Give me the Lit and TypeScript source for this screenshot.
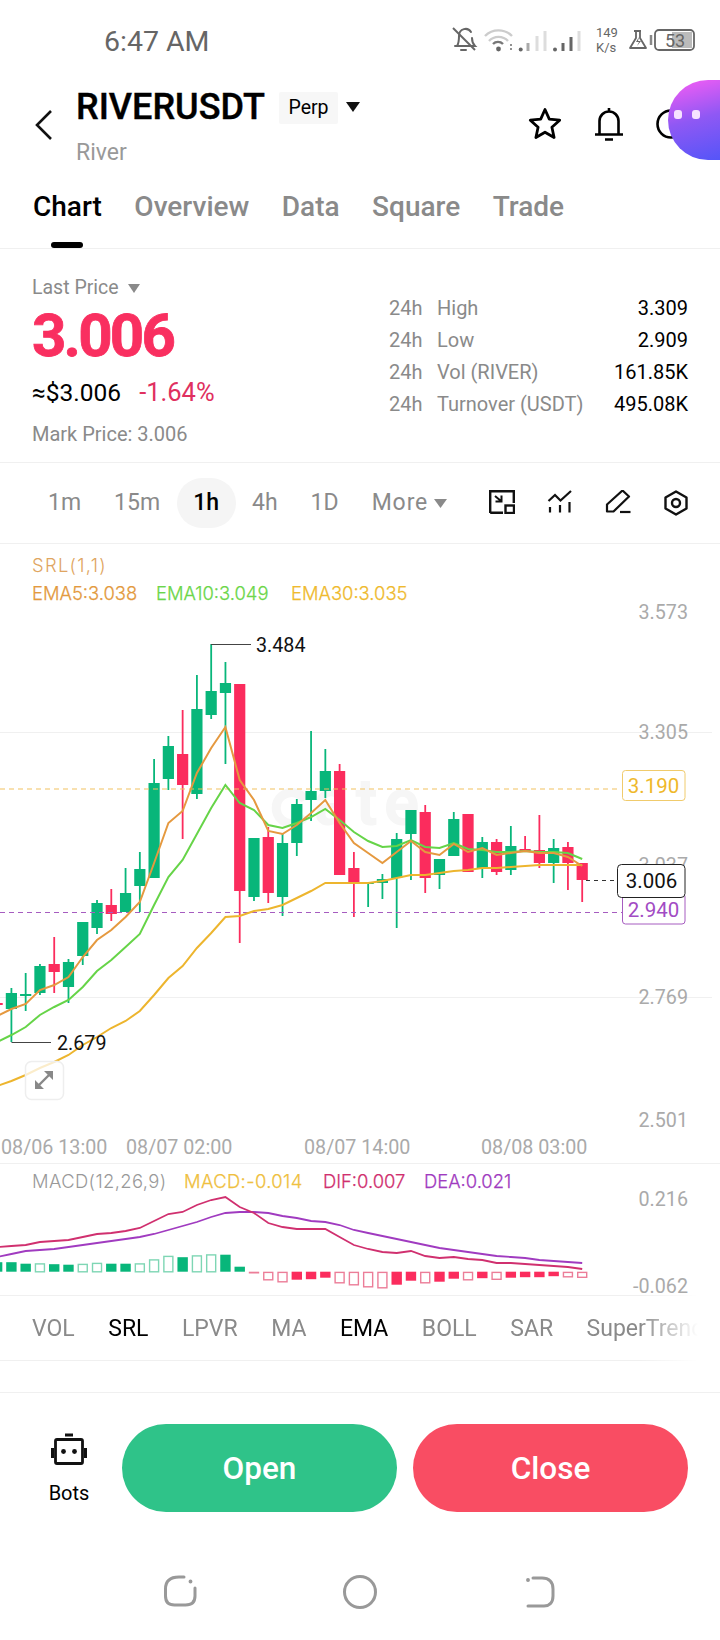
import { LitElement, html, svg, css } from 'lit';
import { customElement } from 'lit/decorators.js';

// candle x positions follow a fixed 14.27px step, first entry is index -1
const cx = (i: number) => 11.4 + 14.27 * i;

type Candle = [number, 'g' | 'r', number, number, number, number];

// [index, colour, body top, body bottom, wick top, wick bottom]
const CANDLES: Candle[] = [
  [-1, 'r', 1003, 1005, 1003, 1005],
  [0, 'g', 993, 1009, 988, 1042],
  [1, 'g', 994, 996, 973, 1011],
  [2, 'g', 966, 993, 964, 995],
  [3, 'r', 964, 972, 937, 993],
  [4, 'g', 962, 987, 959, 1003],
  [5, 'g', 922, 956, 922, 965],
  [6, 'g', 903, 928, 900, 934],
  [7, 'r', 905, 914, 889, 921],
  [8, 'g', 893, 912, 868, 912],
  [9, 'g', 869, 886, 852, 912],
  [10, 'g', 783, 878, 759, 878],
  [11, 'g', 746, 779, 736, 790],
  [12, 'r', 754, 785, 710, 839],
  [13, 'g', 709, 794, 675, 799],
  [14, 'g', 691, 715, 644, 719],
  [15, 'g', 683, 693, 662, 764],
  [16, 'r', 684, 891, 684, 943],
  [17, 'g', 838, 897, 838, 901],
  [18, 'r', 837, 893, 827, 903],
  [19, 'g', 843, 897, 833, 916],
  [20, 'g', 804, 843, 799, 856],
  [21, 'g', 791, 800, 731, 821],
  [22, 'g', 771, 791, 749, 798],
  [23, 'r', 771, 875, 764, 875],
  [24, 'r', 868, 882, 852, 917],
  [25, 'g', 883, 884, 883, 907],
  [26, 'g', 879, 883, 874, 899],
  [27, 'g', 839, 878, 833, 928],
  [28, 'g', 810, 834, 810, 880],
  [29, 'r', 812, 878, 805, 893],
  [30, 'g', 859, 875, 859, 889],
  [31, 'g', 819, 856, 812, 856],
  [32, 'r', 814, 872, 814, 872],
  [33, 'g', 842, 868, 837, 878],
  [34, 'r', 842, 872, 839, 875],
  [35, 'g', 846, 870, 826, 875],
  [36, 'r', 849, 852, 836, 852],
  [37, 'r', 850, 863, 815, 868],
  [38, 'g', 848, 863, 839, 883],
  [39, 'r', 847, 863, 842, 890],
  [40, 'r', 863, 880, 863, 902],
];

const EMA5 = [1016, 1009, 1004, 990, 985, 977, 957, 940, 930, 917, 902, 863, 823, 811, 773, 748, 727, 780, 800, 831, 834, 825, 813, 800, 823, 843, 853, 863, 852, 841, 852, 855, 844, 852, 848, 855, 853, 851, 853, 853, 857, 866];
const EMA10 = [1042, 1035, 1027, 1015, 1007, 1000, 987, 971, 960, 947, 934, 905, 877, 860, 834, 808, 785, 803, 810, 825, 828, 823, 817, 809, 820, 832, 841, 847, 846, 840, 847, 848, 843, 849, 850, 852, 852, 851, 852, 852, 853, 859];
const EMA30 = [1086, 1081, 1075, 1068, 1062, 1055, 1045, 1037, 1028, 1021, 1011, 995, 978, 966, 948, 933, 917, 916, 911, 909, 905, 898, 891, 883, 883, 883, 883, 881, 878, 875, 875, 873, 871, 870, 868, 868, 867, 866, 865, 865, 865, 865];
const DIF = [1247, 1246, 1245, 1242, 1241, 1240, 1237, 1234, 1233, 1231, 1228, 1221, 1214, 1212, 1205, 1200, 1197, 1207, 1213, 1223, 1227, 1229, 1229, 1229, 1237, 1245, 1249, 1252, 1253, 1251, 1256, 1258, 1257, 1259, 1260, 1263, 1263, 1264, 1265, 1266, 1267, 1269];
const DEA = [1257, 1254, 1251, 1250, 1249, 1247, 1245, 1243, 1241, 1239, 1237, 1234, 1230, 1226, 1222, 1217, 1213, 1212, 1212, 1213, 1216, 1218, 1221, 1222, 1225, 1230, 1233, 1236, 1239, 1242, 1245, 1248, 1250, 1252, 1254, 1256, 1257, 1258, 1260, 1261, 1262, 1263];

// histogram height from the zero line, s = solid, h = hollow
const HIST: [number, 's' | 'h'][] = [
  [9.5, 's'], [9.5, 's'], [8, 's'], [8.5, 'h'], [7.5, 's'], [7, 's'], [8, 'h'], [9, 'h'], [8, 's'], [8, 's'], [8.5, 'h'],
  [12.5, 'h'], [16, 'h'], [14.5, 's'], [16.5, 'h'], [17.5, 'h'], [17, 's'], [5, 's'], [-1, 'h'], [-8, 'h'], [-10, 'h'],
  [-8, 's'], [-7.5, 's'], [-6, 's'], [-11, 'h'], [-13, 'h'], [-15, 'h'], [-16, 'h'], [-13, 's'], [-9, 's'], [-11, 'h'],
  [-10, 's'], [-7, 's'], [-8, 'h'], [-6.5, 's'], [-7.5, 'h'], [-6, 's'], [-5.5, 's'], [-5.5, 's'], [-4.5, 's'], [-5, 'h'], [-5.5, 'h'],
];

const points = (ys: number[]) => ys.map((y, n) => `${cx(n - 1).toFixed(1)},${y}`).join(' ');

@customElement('app-root')
export class AppRoot extends LitElement {
  static override styles = css`
    :host {
      display: block;
      position: relative;
      width: 720px;
      height: 1640px;
      overflow: hidden;
      background: #fff;
      color: #000;
      font-family: Roboto, 'Liberation Sans', sans-serif;
    }
    svg {
      display: block;
    }
    .status {
      height: 82px;
      display: flex;
      align-items: center;
      justify-content: space-between;
      padding: 0 20px 0 104px;
      box-sizing: border-box;
    }
    .clock {
      font-size: 28.5px;
      color: #666;
    }
    .stxt {
      font-size: 13px;
      fill: #666;
    }
    .batt {
      font-size: 18px;
      fill: #666;
    }
    .header {
      height: 88px;
      display: flex;
      align-items: flex-start;
      padding: 5px 34px 0 35px;
      box-sizing: border-box;
    }
    .back {
      margin: 23px 24px 0 0;
    }
    .title {
      display: flex;
      align-items: center;
      height: 40px;
    }
    .title b {
      font-size: 36px;
      font-weight: 500;
      -webkit-text-stroke: 0.4px #000;
      line-height: 40px;
    }
    .perp {
      margin: 2px 0 0 14px;
      height: 32px;
      width: 59px;
      line-height: 32px;
      text-align: center;
      background: #f7f7f7;
      font-size: 19.5px;
      border-radius: 2px;
    }
    .caret {
      margin-left: 8px;
    }
    .sub {
      margin-top: 11px;
      font-size: 23px;
      line-height: 30px;
      color: #999;
    }
    .actions {
      margin: 20px 0 0 auto;
      display: flex;
      align-items: center;
      gap: 33px;
    }
    .tabs {
      height: 79px;
      box-sizing: border-box;
      border-bottom: 1px solid #f0f0f0;
      display: flex;
      gap: 32.5px;
      padding-left: 33px;
    }
    .tab {
      display: flex;
      flex-direction: column;
      align-items: center;
      font-size: 28px;
      font-weight: 500;
      line-height: 34px;
      color: #8a8a8a;
      padding-top: 20px;
    }
    .tab.on {
      color: #000;
    }
    .tab i {
      width: 32px;
      height: 6px;
      border-radius: 3px;
      background: #000;
      margin-top: 18px;
    }
    .ticker {
      height: 214px;
      box-sizing: border-box;
      border-bottom: 1px solid #f0f0f0;
      display: flex;
      justify-content: space-between;
      padding: 0 32px;
    }
    .last {
      margin-top: 27px;
      display: flex;
      align-items: center;
      gap: 9px;
      font-size: 19.5px;
      line-height: 24px;
      color: #8a8a8a;
    }
    .price {
      margin-top: 6px;
      font-size: 60px;
      font-weight: 700;
      line-height: 60px;
      letter-spacing: -2.8px;
      -webkit-text-stroke: 0.8px #f92f60;
      color: #f92f60;
    }
    .approx {
      margin-top: 11px;
      display: flex;
      align-items: baseline;
      gap: 18px;
      font-size: 24.5px;
      line-height: 30px;
    }
    .approx span {
      font-size: 25.5px;
      color: #e0305f;
    }
    .mark {
      margin-top: 14px;
      font-size: 20px;
      line-height: 24px;
      color: #8a8a8a;
    }
    .stats {
      width: 299px;
      margin-top: 43px;
      display: grid;
      grid-template-columns: 48px 1fr auto;
      grid-auto-rows: 32px;
      align-items: center;
      align-content: start;
      font-size: 20px;
      color: #8a8a8a;
    }
    .stats b {
      font-weight: 400;
      color: #000;
      text-align: right;
    }
    .frames {
      height: 81px;
      box-sizing: border-box;
      border-bottom: 1px solid #f0f0f0;
      display: flex;
      align-items: center;
      padding: 0 31px 0 31.5px;
      font-size: 23px;
      color: #8a8a8a;
    }
    .tf {
      height: 50px;
      line-height: 52px;
      padding: 0 16.5px;
      border-radius: 25px;
      display: flex;
      align-items: center;
      gap: 6px;
    }
    .tf.on {
      background: #f5f5f5;
      color: #000;
      font-weight: 500;
    }
    .tf .more {
      letter-spacing: 0.9px;
    }
    .tools {
      margin-left: auto;
      display: flex;
      gap: 32px;
    }
    .canvas {
      width: 720px;
      height: 751px;
      overflow: visible;
    }
    .leg {
      font-family: Inter, Roboto, sans-serif;
      font-size: 18.4px;
      font-weight: 300;
      stroke-width: 0.25px;
    }
    .leg.wide {
      letter-spacing: 1.3px;
    }
    .leg.mid {
      letter-spacing: 0.4px;
    }
    .ax {
      font-size: 19.7px;
      fill: #aaa;
    }
    .peak {
      font-size: 19.7px;
      fill: #111;
    }
    .tag {
      font-size: 20.5px;
    }
    .mark-g {
      font-size: 66px;
      font-weight: 700;
      letter-spacing: 6px;
      fill: #f6f6f6;
    }
    .inds {
      height: 66px;
      box-sizing: border-box;
      border-top: 1px solid #f0f0f0;
      border-bottom: 1px solid #f0f0f0;
      display: flex;
      align-items: center;
      gap: 33.5px;
      padding-left: 32px;
      font-size: 23px;
      color: #8a8a8a;
      white-space: nowrap;
      -webkit-mask-image: linear-gradient(to right, #000 640px, transparent 698px);
      mask-image: linear-gradient(to right, #000 640px, transparent 698px);
    }
    .inds .on {
      color: #000;
    }
    .spacer {
      height: 32px;
      box-sizing: border-box;
      border-bottom: 1px solid #f0f0f0;
    }
    .actionsbar {
      display: flex;
      gap: 16px;
      padding: 31px 32px 0;
    }
    .bots {
      width: 74px;
      height: 88px;
      display: flex;
      flex-direction: column;
      align-items: center;
      padding-top: 9px;
      box-sizing: border-box;
      font-size: 20px;
      line-height: 24px;
    }
    .bots span {
      margin-top: 14px;
    }
    .btn {
      flex: 1;
      height: 88px;
      border-radius: 44px;
      display: flex;
      align-items: center;
      justify-content: center;
      color: #fff;
      font-size: 31.5px;
      font-weight: 500;
      padding-top: 1px;
      box-sizing: border-box;
    }
    .btn.open {
      background: #2fc389;
    }
    .btn.close {
      background: #f94d63;
    }
    .nav {
      display: flex;
      gap: 140px;
      padding: 60px 0 0 160px;
    }
    .blob {
      position: absolute;
      right: 0;
      top: 80px;
      width: 52px;
      height: 80px;
      border-radius: 40px 0 0 40px;
      background: linear-gradient(165deg, #f95df4 0%, #8f58f4 50%, #5555f8 100%);
      display: flex;
      gap: 10px;
      padding: 30px 0 0 6px;
      box-sizing: border-box;
    }
    .blob i {
      width: 8px;
      height: 9px;
      border-radius: 3px;
      background: #f6e3ff;
    }
  `;

  private statusIcons() {
    return html`<svg width="250" height="40" viewBox="450 21 250 40" fill="none">
      <path d="M457 46c2-3 2-6 2-10 0-8 9-9 12-4M472 38c0 3 1 6 3 8H455M461 50h5" stroke="#666" stroke-width="2" stroke-linecap="round" />
      <path d="M453 28l22 22" stroke="#666" stroke-width="2" />
      <path d="M485 36a19 19 0 0 1 27 0M489 41a13 13 0 0 1 19 0" stroke="#ccc" stroke-width="2.4" />
      <path d="M493 44a7 7 0 0 1 10 0" stroke="#777" stroke-width="2.4" />
      <circle cx="498.5" cy="49" r="2.4" fill="#666" />
      <path d="M511 44v2M511 48v2" stroke="#777" stroke-width="1.6" />
      <circle cx="520.7" cy="49.5" r="2" fill="#666" />
      <path d="M528 43v8" stroke="#aaa" stroke-width="3" />
      <path d="M537 36v15M545 31v20" stroke="#ddd" stroke-width="3" />
      <circle cx="555" cy="49.5" r="2" fill="#666" />
      <path d="M563 43v8M571 37v14" stroke="#666" stroke-width="3" />
      <path d="M579 31v20" stroke="#ddd" stroke-width="3" />
      <text class="stxt" x="596" y="37">149</text>
      <text class="stxt" x="596" y="52">K/s</text>
      <path d="M634 31h7M636 31v7l-6 10h16l-6-10v-7" stroke="#666" stroke-width="1.8" stroke-linejoin="round" />
      <path d="M639 37l-3 5h3l-2 4 4-5h-3z" fill="#666" />
      <path d="M651 35v10" stroke="#888" stroke-width="2.5" />
      <rect x="672" y="32" width="20" height="16" fill="#bbb" />
      <rect x="655" y="30" width="39" height="20" rx="4" stroke="#666" stroke-width="1.8" />
      <text class="batt" x="665" y="46.5">53</text>
    </svg>`;
  }

  private headerActions() {
    return html`<div class="actions">
      <svg width="34" height="34" viewBox="0 0 34 34" fill="none">
        <path d="M17 2.5l4.3 9.6 10.4 1.1-7.8 7 2.2 10.3-9.1-5.3-9.1 5.3 2.2-10.3-7.8-7 10.4-1.1z" stroke="#000" stroke-width="2.8" stroke-linejoin="round" />
      </svg>
      <svg width="28" height="34" viewBox="0 0 28 34" fill="none">
        <path d="M4.5 27V14a9.5 9.5 0 0 1 19 0v13M0 27.5h28M10 32.5h8M14 1v3" stroke="#000" stroke-width="2.6" />
      </svg>
      <svg width="30" height="30" viewBox="0 0 30 30" fill="none">
        <circle cx="15" cy="15" r="13.5" stroke="#000" stroke-width="2.6" />
      </svg>
    </div>`;
  }

  private tools() {
    return html`<div class="tools">
      <svg width="26" height="24" viewBox="0 0 26 24" fill="none" stroke="#111" stroke-width="2.4">
        <path d="M1.2 23V1.2h23.600V13M1.200 22.800H14" />
        <rect x="16.500" y="15.500" width="8.500" height="7.500" />
        <path d="M6 6l6 5M12.500 5.500v6h-6" stroke-width="2" />
      </svg>
      <svg width="26" height="24" viewBox="547 492 26 24" fill="none" stroke="#111" stroke-width="2.2">
        <path d="M548.500 503l6.500-6 5.500 5.500 10.500-9.500" />
        <path d="M550 509v5.500M560 507v7.500M569.500 504v10.500" />
      </svg>
      <svg width="26" height="24" viewBox="605 492 26 24" fill="none" stroke="#111" stroke-width="2.2">
        <path d="M607 513.500v-7l15.500-14 6.500 6-15.500 15z" stroke-linejoin="round" />
        <path d="M620 514h10.500" />
      </svg>
      <svg width="26" height="26" viewBox="0 0 26 26" fill="none" stroke="#111" stroke-width="2.4">
        <path d="M13 1.500l10.500 6v11l-10.500 6-10.500-6v-11z" stroke-linejoin="round" />
        <circle cx="13" cy="13" r="4" />
      </svg>
    </div>`;
  }

  private candles() {
    return CANDLES.map(([i, c, top, bot, wt, wb]) => {
      const x = cx(i);
      const col = c === 'g' ? '#08b67a' : '#fb2c5d';
      return svg`<path d="M${x} ${wt}V${wb}" stroke=${col} stroke-width="1.8" />
        <rect x=${x - 5.6} y=${top} width="11.2" height=${bot - top} fill=${col} />`;
    });
  }

  private hist() {
    const base = 1271.7;
    return HIST.map(([h, kind], n) => {
      const x = cx(n - 1) - 5.2;
      const y = h > 0 ? base - h : base;
      const green = h > 0;
      if (kind === 's') {
        return svg`<rect x=${x} y=${y} width="10.4" height=${Math.abs(h)} fill=${green ? '#08b67a' : '#fb2c5d'} />`;
      }
      return svg`<rect x=${x + 0.7} y=${y + 0.7} width="9" height=${Math.abs(h) - 0.6 > 0 ? Math.abs(h) - 0.6 : 0.5} fill="#fff" stroke=${green ? '#7ed6b4' : '#ec7d98'} stroke-width="1.4" />`;
    });
  }

  private chart() {
    return html`<svg class="canvas" viewBox="0 544 720 751" fill="none">
      <path d="M0 732.500H712M0 997.500H712" stroke="#f0f0f0" />
      <path d="M0 1163.500H720" stroke="#f0f0f0" />

      <path d="M305 800a15.500 15.500 0 1 0 0 16" stroke="#f6f6f6" stroke-width="9" />
      <text class="mark-g" x="314" y="825">ate</text>

      <text class="leg wide" x="32" y="572" fill="#e0a561">SRL(1,1)</text>
      <text class="leg" x="32" y="599.500" fill="#e39a3e" stroke="#e39a3e">EMA5:3.038</text>
      <text class="leg" x="156" y="599.500" fill="#6cd64a" stroke="#6cd64a">EMA10:3.049</text>
      <text class="leg" x="291" y="599.500" fill="#efba2e" stroke="#efba2e">EMA30:3.035</text>

      <text class="ax" text-anchor="end" x="688" y="619">3.573</text>
      <text class="ax" text-anchor="end" x="688" y="739">3.305</text>
      <text class="ax" text-anchor="end" x="688" y="872">3.037</text>
      <text class="ax" text-anchor="end" x="688" y="1004">2.769</text>
      <text class="ax" text-anchor="end" x="688" y="1127">2.501</text>

      ${this.candles()}

      <path d="M0 789H620" stroke="#f2c261" stroke-width="1.2" stroke-dasharray="5 4" />
      <path d="M0 912.500H622" stroke="#a65cc0" stroke-width="1.2" stroke-dasharray="5 4" />
      <path d="M586 880.500H617" stroke="#333" stroke-dasharray="4 4" />

      <polyline points=${points(EMA30)} stroke="#edb52e" stroke-width="2" />
      <polyline points=${points(EMA10)} stroke="#66d448" stroke-width="2" />
      <polyline points=${points(EMA5)} stroke="#e5993f" stroke-width="2" />

      <path d="M211 644.500H251M11.500 1042.500H51" stroke="#444" />
      <text class="peak" x="256" y="651.500">3.484</text>
      <text class="peak" x="57" y="1049.500">2.679</text>

      <rect x="25.500" y="1061.500" width="38" height="38" rx="6" fill="#fff" fill-opacity="0.75" stroke="#eee" stroke-width="1.5" />
      <path d="M36 1088l16-16" stroke="#888" stroke-width="2.4" />
      <path d="M35 1080v9h9zM53 1071h-9l9 9z" fill="#888" />

      <text class="ax" x="1" y="1154">08/06 13:00</text>
      <text class="ax" x="126" y="1154">08/07 02:00</text>
      <text class="ax" x="304" y="1154">08/07 14:00</text>
      <text class="ax" x="481" y="1154">08/08 03:00</text>

      <rect x="622.500" y="770.500" width="62.500" height="30" rx="3" fill="#fff" stroke="#f0cb6c" />
      <text class="tag" x="653.500" y="793" text-anchor="middle" fill="#efb82a">3.190</text>

      <rect x="622.500" y="893.500" width="62.500" height="30.500" rx="3" fill="#fff" stroke="#a65cc0" />
      <text class="tag" x="653.500" y="917" text-anchor="middle" fill="#a24bc4">2.940</text>

      <rect x="617.500" y="864.500" width="67.500" height="33" rx="4" fill="#fff" stroke="#222" />
      <text class="tag" x="651.500" y="888" text-anchor="middle" fill="#111">3.006</text>

      <text class="leg mid" x="32" y="1188" fill="#999">MACD(12,26,9)</text>
      <text class="leg mid" x="184" y="1188" fill="#efc040" stroke="#efc040">MACD:-0.014</text>
      <text class="leg" x="323" y="1188" fill="#d0306f" stroke="#d0306f">DIF:0.007</text>
      <text class="leg" x="424" y="1188" fill="#a03bc0" stroke="#a03bc0">DEA:0.021</text>
      <text class="ax" text-anchor="end" x="688" y="1206">0.216</text>
      <text class="ax" text-anchor="end" x="688" y="1293">-0.062</text>

      ${this.hist()}
      <polyline points=${points(DEA)} stroke="#a03bc0" stroke-width="1.8" />
      <polyline points=${points(DIF)} stroke="#d0306f" stroke-width="1.8" />
    </svg>`;
  }

  override render() {
    return html`
      <div class="status">
        <div class="clock">6:47 AM</div>
        ${this.statusIcons()}
      </div>

      <div class="header">
        <svg class="back" width="17" height="30" viewBox="0 0 17 30" fill="none">
          <path d="M16 1L2 15l14 14" stroke="#111" stroke-width="2.6" />
        </svg>
        <div>
          <div class="title">
            <b>RIVERUSDT</b>
            <span class="perp">Perp</span>
            <svg class="caret" width="14" height="10" viewBox="0 0 14 10"><path d="M0 0h14L7 10z" fill="#111" /></svg>
          </div>
          <div class="sub">River</div>
        </div>
        ${this.headerActions()}
      </div>

      <div class="tabs">
        <div class="tab on">Chart<i></i></div>
        <div class="tab">Overview</div>
        <div class="tab">Data</div>
        <div class="tab">Square</div>
        <div class="tab">Trade</div>
      </div>

      <div class="ticker">
        <div>
          <div class="last">
            Last Price
            <svg width="12" height="9" viewBox="0 0 12 9"><path d="M0 0h12L6 9z" fill="#8a8a8a" /></svg>
          </div>
          <div class="price">3.006</div>
          <div class="approx">≈$3.006 <span>-1.64%</span></div>
          <div class="mark">Mark Price: 3.006</div>
        </div>
        <div class="stats">
          <div>24h</div><div>High</div><b>3.309</b>
          <div>24h</div><div>Low</div><b>2.909</b>
          <div>24h</div><div>Vol (RIVER)</div><b>161.85K</b>
          <div>24h</div><div>Turnover (USDT)</div><b>495.08K</b>
        </div>
      </div>

      <div class="frames">
        <div class="tf">1m</div>
        <div class="tf">15m</div>
        <div class="tf on">1h</div>
        <div class="tf">4h</div>
        <div class="tf">1D</div>
        <div class="tf">
          <span class="more">More</span>
          <svg width="13" height="9" viewBox="0 0 13 9"><path d="M0 0h13L6.500 9z" fill="#8a8a8a" /></svg>
        </div>
        ${this.tools()}
      </div>

      ${this.chart()}

      <div class="inds">
        <span>VOL</span><span class="on">SRL</span><span>LPVR</span><span>MA</span><span class="on">EMA</span><span>BOLL</span><span>SAR</span><span>SuperTrend</span>
      </div>
      <div class="spacer"></div>

      <div class="actionsbar">
        <div class="bots">
          <svg width="36" height="34" viewBox="0 0 36 34" fill="none">
            <path d="M14 2h8" stroke="#111" stroke-width="3" />
            <rect x="4.500" y="6.500" width="27" height="24" rx="1.500" stroke="#111" stroke-width="2.800" />
            <path d="M1.500 15v10M34.500 15v10" stroke="#111" stroke-width="3" />
            <circle cx="12.500" cy="18.500" r="2.400" fill="#111" />
            <circle cx="23.500" cy="18.500" r="2.400" fill="#111" />
          </svg>
          <span>Bots</span>
        </div>
        <div class="btn open">Open</div>
        <div class="btn close">Close</div>
      </div>

      <div class="nav">
        <svg width="40" height="40" viewBox="0 0 40 40" fill="none" stroke="#999" stroke-width="3" stroke-linecap="round">
          <path d="M24 5h-5C10 5 5.500 9 5.500 17v7c0 6 3 9 9 9h11c6 0 9.500-3 9.500-9v-8" />
          <circle cx="30.500" cy="9.500" r="1.200" fill="#999" stroke-width="1.500" />
        </svg>
        <svg width="40" height="40" viewBox="0 0 40 40" fill="none" stroke="#999" stroke-width="3">
          <circle cx="20" cy="20" r="15.500" />
        </svg>
        <svg width="40" height="40" viewBox="0 0 40 40" fill="none" stroke="#999" stroke-width="3" stroke-linecap="round">
          <path d="M13 6h9c7 0 11 4 11 11v7c0 7-4 10-9 10H8" />
          <circle cx="8" cy="8" r="1.200" fill="#999" stroke-width="1.500" />
        </svg>
      </div>

      <div class="blob"><i></i><i></i></div>
    `;
  }
}
